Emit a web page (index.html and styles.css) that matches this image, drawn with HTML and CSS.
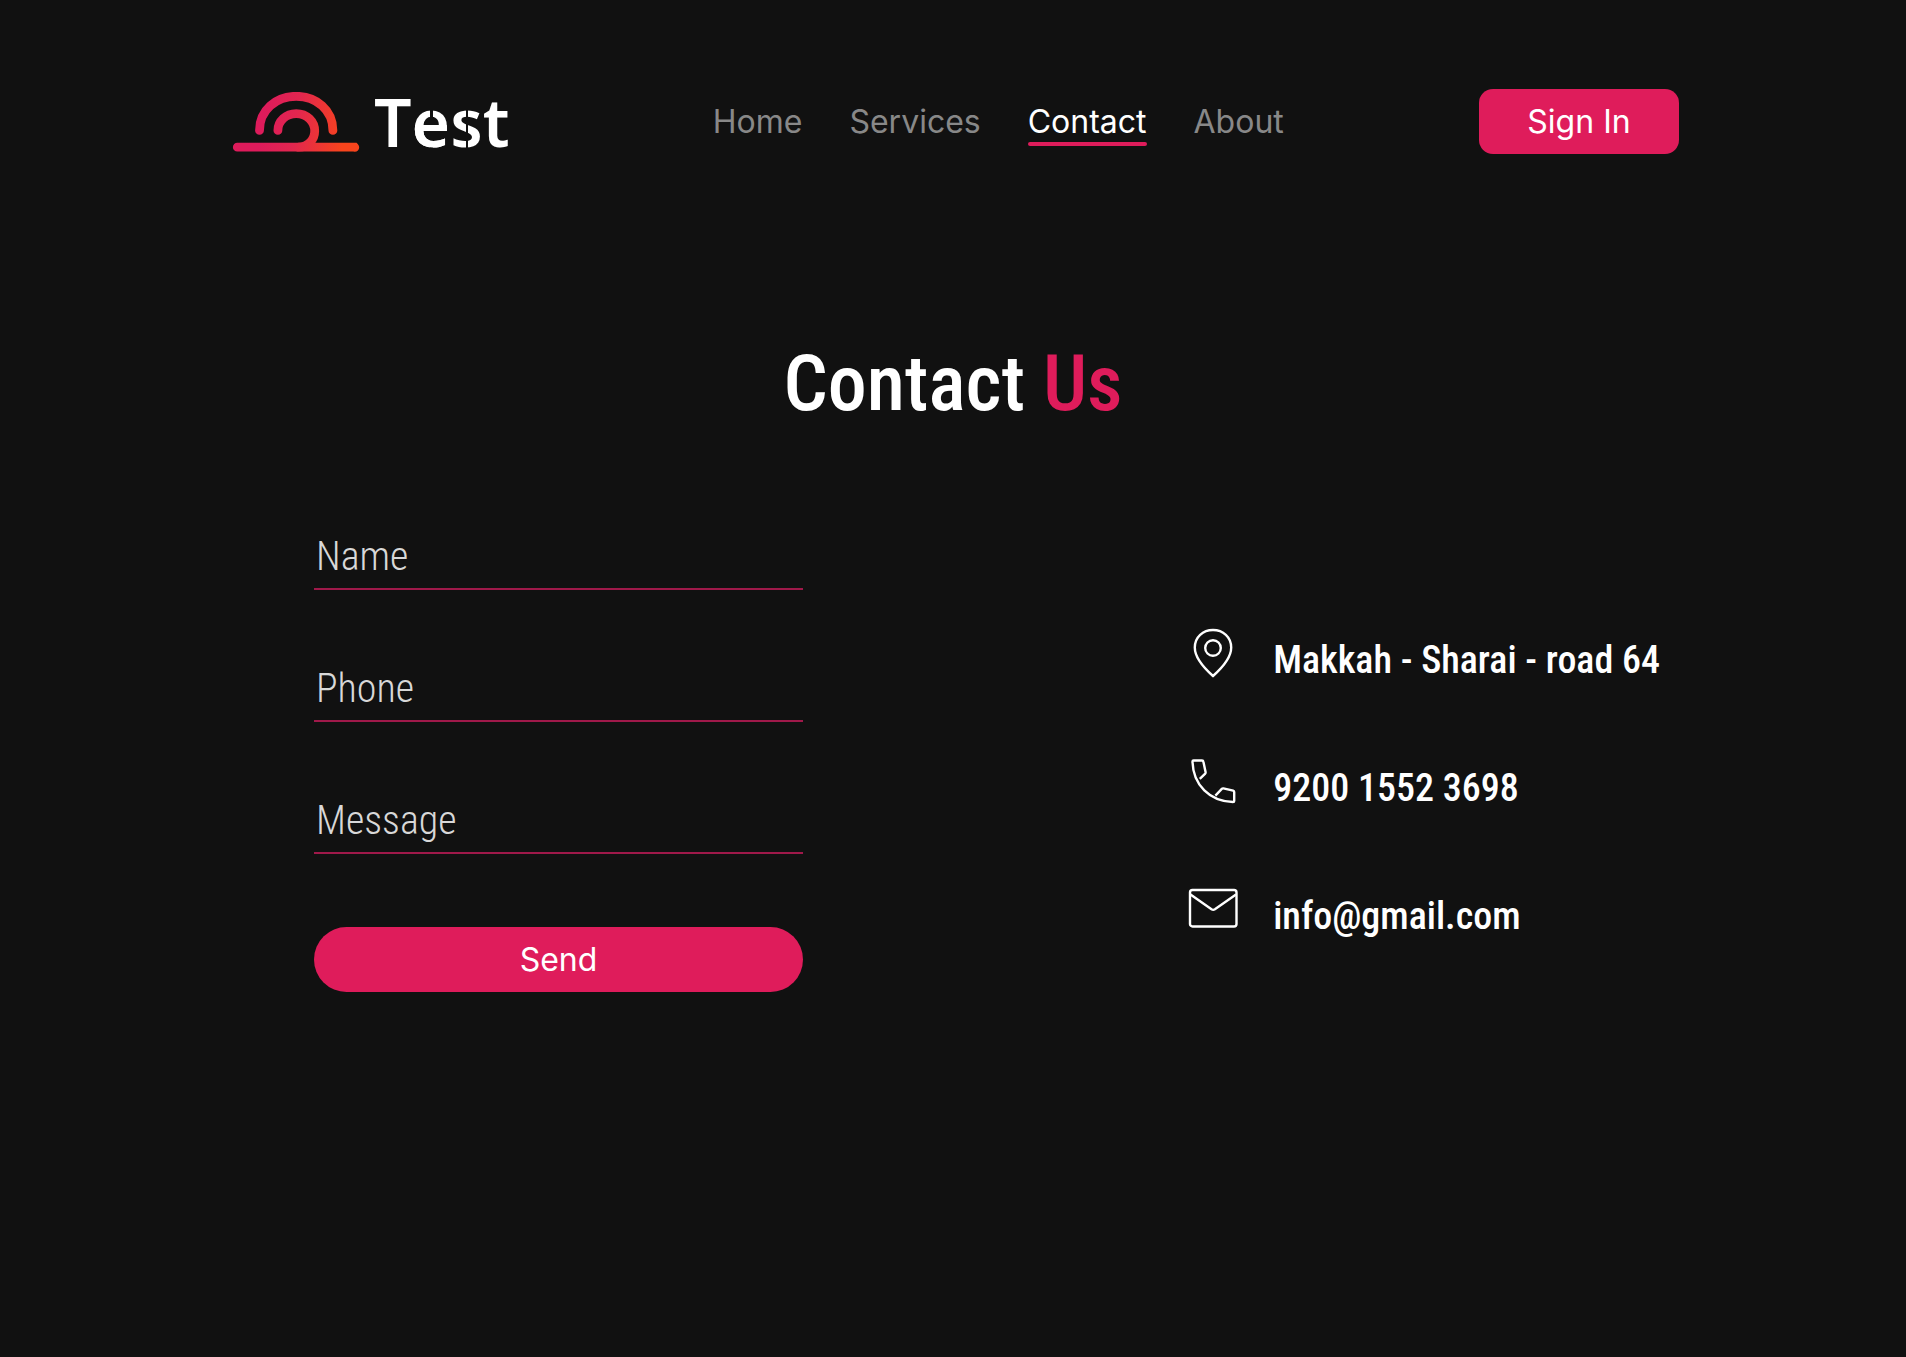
FILE: index.html
```
<!DOCTYPE html>
<html lang="en">
<head>
    <meta charset="UTF-8">
    <meta name="viewport" content="width=device-width, initial-scale=1.0">
    <title>Contact Us</title>
    <link rel="stylesheet" href="styles.css">
</head>
<body>
    <header>
        <a href="#" class="logo">
            <svg class="logo-icon" viewBox="0 0 127 60" fill="none" stroke="url(#sunset)" stroke-width="8.8" stroke-linecap="round" aria-hidden="true">
                <defs>
                    <linearGradient id="sunset" gradientUnits="userSpaceOnUse" x1="30" y1="30" x2="112" y2="42">
                        <stop offset="0" stop-color="#de1b5b"/>
                        <stop offset="0.4" stop-color="#e2264f"/>
                        <stop offset="1" stop-color="#f8441c"/>
                    </linearGradient>
                </defs>
                <path d="M27 38.4C27 18 43.5 4.3 63.7 4.3S100.4 18 100.4 38.4"/>
                <path d="M45.4 38.4C45.4 29 53.5 21.6 63.7 21.6C74.5 21.6 82.2 29.6 82.2 39C82.2 47.5 76 54.8 66 55.2"/>
                <path d="M4.8 55.2H122.2L122.3 55.3"/>
            </svg>
            <span class="logo-text">T<span class="cut-e">e</span><span class="cut-s">s</span>t</span>
        </a>
        <nav>
            <a href="#">Home</a>
            <a href="#">Services</a>
            <a href="#" class="active">Contact</a>
            <a href="#">About</a>
        </nav>
        <button type="button" class="btn btn-signin">Sign In</button>
    </header>

    <main>
        <h1>Contact <span>Us</span></h1>

        <div class="contact">
            <form>
                <input type="text" name="name" placeholder="Name" aria-label="Name">
                <input type="tel" name="phone" placeholder="Phone" aria-label="Phone">
                <input type="text" name="message" placeholder="Message" aria-label="Message">
                <button type="submit" class="btn btn-send">Send</button>
            </form>

            <ul class="info">
                <li>
                    <svg viewBox="0 0 50 50" aria-hidden="true">
                        <path d="M25 48C16 40 6.8 29.5 6.8 19.5C6.8 9 15 2 25 2S43.2 9 43.2 19.5C43.2 29.5 34 40 25 48Z"/>
                        <circle cx="25" cy="20" r="7.8"/>
                    </svg>
                    <span>Makkah - Sharai - road 64</span>
                </li>
                <li>
                    <svg viewBox="0 0 50 50" aria-hidden="true">
                        <path d="M5.5 4.5H14Q15.2 4.5 15.4 5.7L17.6 16.2Q17.7 17 17.2 17.6L11.8 22.8M4.5 5.5Q4.5 4.5 5.5 4.5M4.5 5.5C5 29 22 45.5 45 46Q46.2 46 46.2 45V36Q46.2 35 45.2 34.7L35.4 32.4Q34.5 32.2 33.8 32.9L27.4 39.6"/>
                    </svg>
                    <span>9200 1552 3698</span>
                </li>
                <li>
                    <svg viewBox="0 0 50 50" aria-hidden="true">
                        <rect x="2" y="6" width="46.5" height="36.5" rx="2.5"/>
                        <path d="M2.5 10.5L23.5 25.3Q25.2 26.4 26.9 25.3L48 10.5"/>
                    </svg>
                    <span>info@gmail.com</span>
                </li>
            </ul>
        </div>
    </main>
</body>
</html>
```
FILE: styles.css
```
* {
    box-sizing: border-box;
}
body {
    margin: 0;
    min-height: 100vh;
    background-color: #111;
    color: #fff;
    font-family: Inter, sans-serif;
    font-size: 32px;
}
a {
    color: inherit;
    text-decoration: none;
}
header {
    display: flex;
    justify-content: space-between;
    align-items: center;
    padding: 89px 227px 0 232px;
}

/* logo */
.logo {
    display: flex;
    align-items: center;
    gap: 14px;
    padding-right: 8px;
}
.logo-icon {
    width: 128px;
    height: 60px;
}
.logo-text {
    padding-bottom: 2px;
    font-family: "Noto Sans", sans-serif;
    font-size: 66px;
    font-weight: 600;
    font-kerning: none;
    line-height: 60px;
}
/* stencil cuts through the e and the s */
.cut-e,
.cut-s {
    color: transparent;
    background-clip: text;
    -webkit-background-clip: text;
}
.cut-e {
    background-image: linear-gradient(90deg, #fff 48%, transparent 48%, transparent 55%, #fff 55%), linear-gradient(transparent 55%, #fff 55%);
}
.cut-s {
    background-image: linear-gradient(90deg, #fff 47%, transparent 47%, transparent 55%, #fff 55%);
}

nav {
    display: flex;
    gap: 47px;
}
nav a {
    padding-top: 4px;
    color: #888;
    line-height: 40px;
}
nav a::after {
    content: "";
    display: block;
    height: 4px;
    border-radius: 2px;
}
nav a.active {
    color: #fff;
}
nav a.active::after {
    background-color: #df1c5b;
}

.btn {
    height: 65px;
    border: none;
    background-color: #df1c5b;
    color: #fff;
    font: inherit;
    cursor: pointer;
}
.btn-signin {
    width: 200px;
    border-radius: 14px;
}
.btn-send {
    margin-top: 9px;
    border-radius: 33px;
}

h1 {
    margin: 178px 0 0;
    text-align: center;
    font-family: "Roboto Condensed", Roboto, sans-serif;
    font-size: 78px;
    font-weight: 500;
    line-height: 104px;
}
h1 span {
    color: #df1c5b;
}

.contact {
    display: flex;
    justify-content: space-between;
    align-items: flex-start;
    padding: 86px 246px 0 314px;
    font-family: "Roboto Condensed", Roboto, sans-serif;
    font-size: 40px;
}
form {
    display: flex;
    flex-direction: column;
    gap: 64px;
    width: 489px;
}
form input {
    width: 100%;
    height: 68px;
    padding: 2px 2px 0;
    border: none;
    border-bottom: 2px solid #a0194a;
    background: none;
    color: #fff;
    font: inherit;
    font-weight: 300;
    outline: none;
}
form input::placeholder {
    color: #d8d8d8;
    opacity: 1;
}
form .btn {
    font-family: Inter, sans-serif;
    font-size: 32px;
}

.info {
    display: flex;
    flex-direction: column;
    gap: 64px;
    margin: 106px 0 0;
    padding: 0;
    list-style: none;
    font-size: 38px;
    font-weight: 500;
    line-height: 64px;
}
.info li {
    display: flex;
    align-items: flex-start;
    gap: 35px;
}
.info svg {
    width: 50px;
    height: 50px;
    fill: none;
    stroke: #fff;
    stroke-width: 2.4;
}
```
